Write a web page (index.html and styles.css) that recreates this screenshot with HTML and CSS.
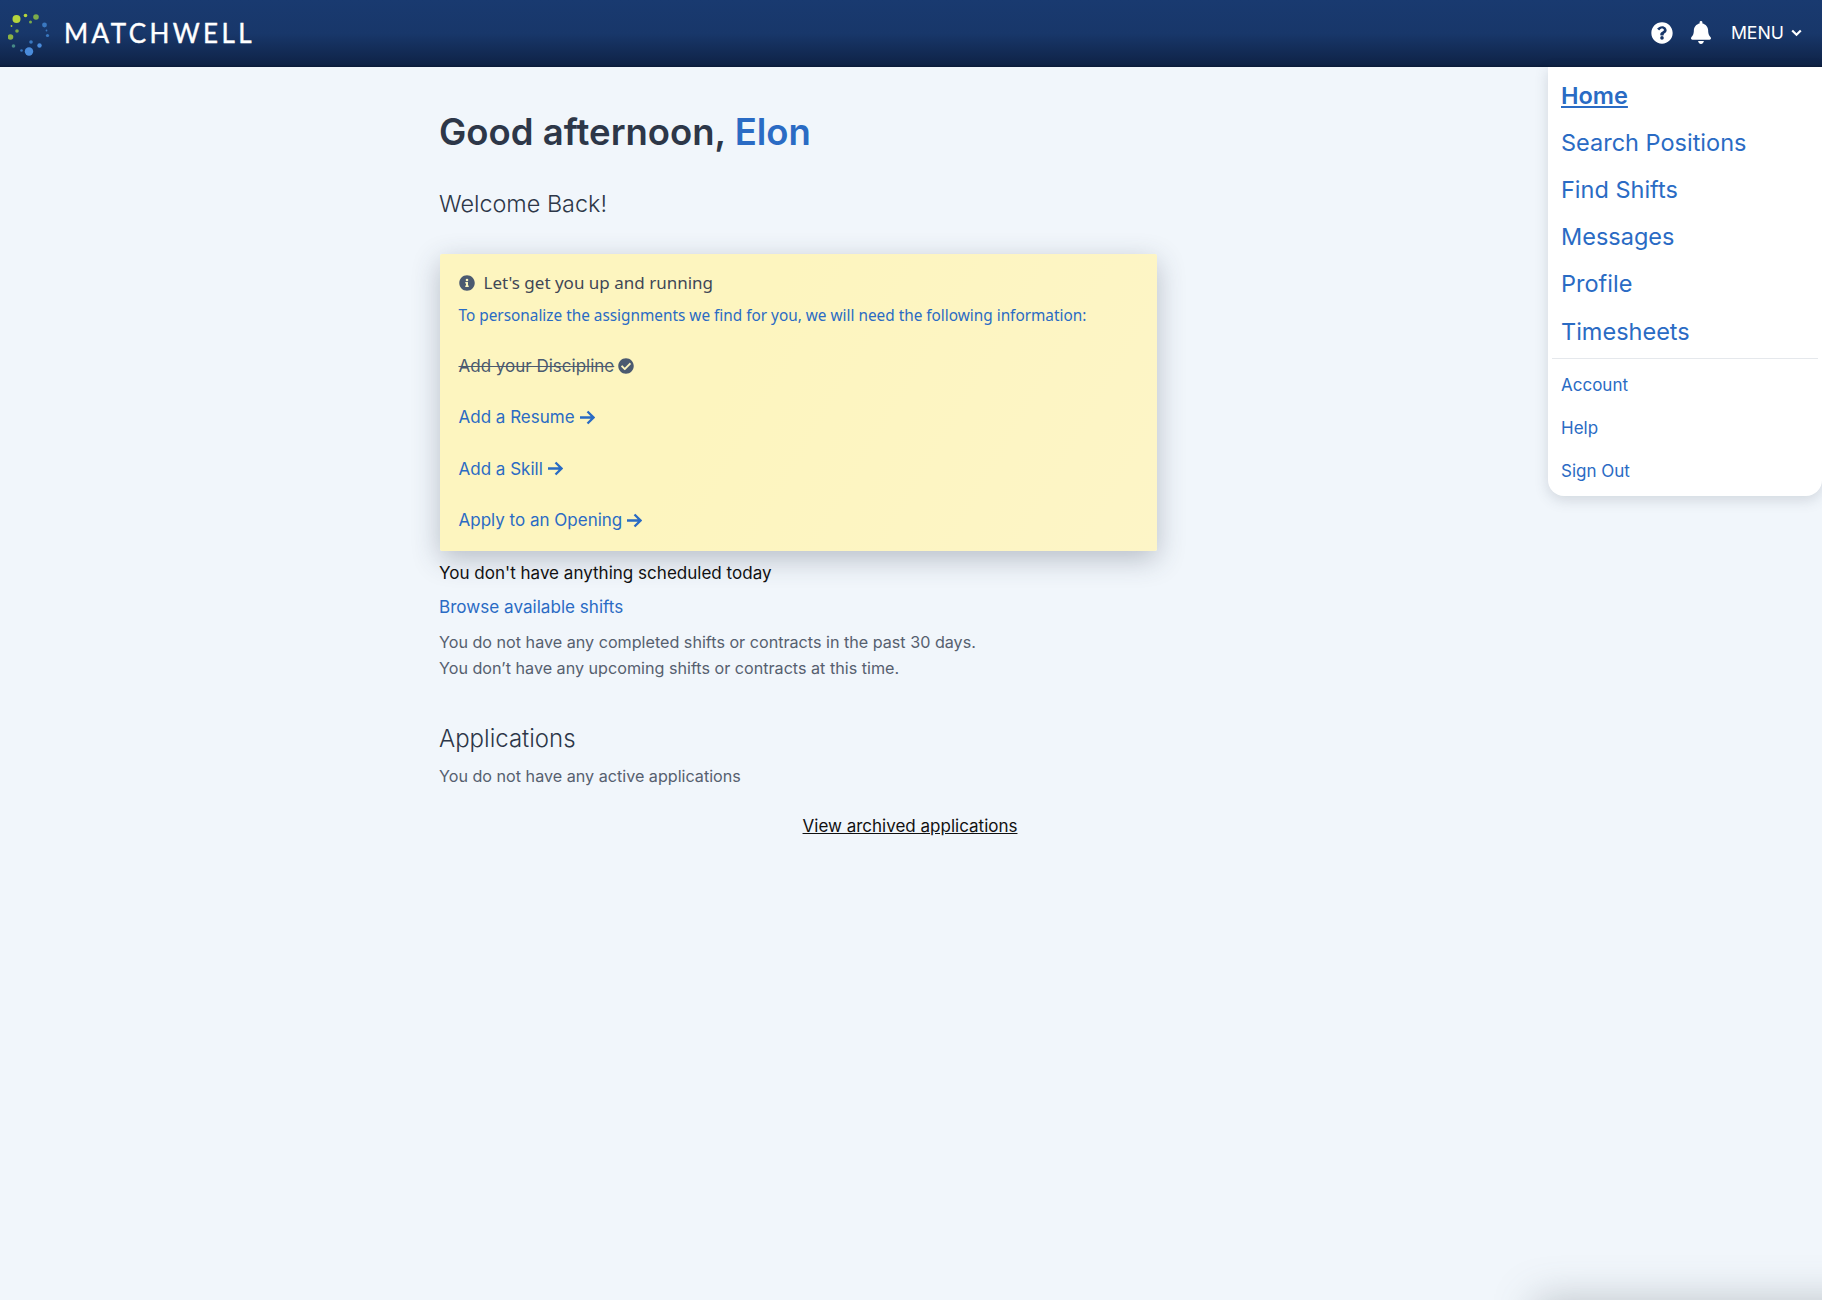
FILE: index.html
```html
<!DOCTYPE html>
<html>
<head>
<title>Matchwell</title>
<link rel="stylesheet" href="styles.css">
</head>
<body>
<header class="topbar">
  <div class="brand">
    <svg class="logo" width="46" height="46" viewBox="0 0 46 46">
      <circle cx="8.5" cy="9" r="4" fill="#b5d53c"/>
      <circle cx="17.5" cy="5.5" r="1.8" fill="#b5d53c"/>
      <circle cx="28" cy="7" r="2.8" fill="#7cab4a"/>
      <circle cx="22.5" cy="12" r="1.5" fill="#7cab4a"/>
      <circle cx="3.5" cy="16" r="0.9" fill="#a8c93c"/>
      <circle cx="9" cy="21" r="1.8" fill="#7cab4a"/>
      <circle cx="2.5" cy="27" r="2.8" fill="#8cb344"/>
      <circle cx="5.5" cy="36" r="1.8" fill="#468a87"/>
      <circle cx="13.5" cy="40.5" r="1.3" fill="#3a78c0"/>
      <circle cx="21" cy="41.5" r="4.2" fill="#4a8cdc"/>
      <circle cx="23" cy="32" r="1.8" fill="#3a78c0"/>
      <circle cx="31.5" cy="35.5" r="2.2" fill="#4a8cdc"/>
      <circle cx="36.5" cy="15" r="2.4" fill="#3a78c0"/>
      <circle cx="38.5" cy="20.5" r="0.9" fill="#3a78c0"/>
      <circle cx="39.5" cy="25.5" r="1.6" fill="#3a78c0"/>
    </svg>
    <span class="brand-name">MATCHWELL</span>
  </div>
  <div class="top-actions">
    <svg class="top-icon" width="22" height="22" viewBox="0 0 512 512"><path fill="#fff" d="M256 8C119 8 8 119 8 256s111 248 248 248 248-111 248-248S393 8 256 8zm0 404a42 42 0 1 1 0-84 42 42 0 0 1 0 84zm39.800-118v6c0 6.600-5.400 12-12 12h-55.600c-6.600 0-12-5.400-12-12v-12c0-40 30.300-56 53.200-68.800 19.600-11 31.600-18.500 31.600-33.100 0-19.300-24.600-32.100-44.500-32.100-25.900 0-37.900 12.300-54.700 33.500-4.100 5.200-11.600 6.100-16.800 2.200l-33.700-25.600c-5.100-3.900-6.200-11-2.700-16.300C175 121 208.400 96 260.500 96c48.700 0 103.500 38 103.500 94.500 0 62.500-68.200 69.600-68.200 103.500z"/></svg>
    <svg class="top-icon bell" width="20" height="23" viewBox="0 0 448 512"><path fill="#fff" d="M224 512c35.300 0 64-28.700 64-64H160c0 35.300 28.700 64 64 64zm215.400-149.700c-19.300-20.800-55.500-52-55.500-154.300 0-77.700-54.500-139.900-128-155.200V32a32 32 0 1 0-64 0v20.800C118.500 68.100 64 130.300 64 208c0 102.300-36.200 133.500-55.500 154.300A31.300 31.300 0 0 0 0 384c.1 16.400 13 32 32.100 32h383.800c19.100 0 32-15.600 32.100-32a31.200 31.200 0 0 0-8.600-21.700z"/></svg>
    <span class="menu-toggle">MENU
      <svg width="11" height="8" viewBox="0 0 11 8"><path d="M1.200 1.500 5.500 5.800 9.800 1.500" fill="none" stroke="#fff" stroke-width="2.200"/></svg>
    </span>
  </div>
</header>

<nav class="side-menu">
  <ul class="menu-main">
    <li><a class="current" href="#">Home</a></li>
    <li><a href="#">Search Positions</a></li>
    <li><a href="#">Find Shifts</a></li>
    <li><a href="#">Messages</a></li>
    <li><a href="#">Profile</a></li>
    <li><a href="#">Timesheets</a></li>
  </ul>
  <ul class="menu-sub">
    <li><a href="#">Account</a></li>
    <li><a href="#">Help</a></li>
    <li><a href="#">Sign Out</a></li>
  </ul>
</nav>

<main class="content">
  <h1 class="greeting">Good afternoon, <span class="name">Elon</span></h1>
  <p class="welcome">Welcome Back!</p>

  <section class="setup-card">
    <div class="setup-title">
      <svg width="16" height="16" viewBox="0 0 512 512"><path fill="#4b5a70" d="M256 8C119 8 8 119 8 256s111 248 248 248 248-111 248-248S393 8 256 8zm0 110a42 42 0 1 1 0 84 42 42 0 0 1 0-84zm56 254c0 6.600-5.400 12-12 12h-88c-6.600 0-12-5.400-12-12v-24c0-6.600 5.400-12 12-12h12v-64h-12c-6.600 0-12-5.400-12-12v-24c0-6.600 5.400-12 12-12h64c6.600 0 12 5.400 12 12v100h12c6.600 0 12 5.400 12 12v24z"/></svg>
      <span>Let's get you up and running</span>
    </div>
    <p class="setup-intro">To personalize the assignments we find for you, we will need the following information:</p>
    <div class="setup-item done"><s>Add your Discipline</s>
      <svg width="16" height="16" viewBox="0 0 512 512"><path fill="#4b5a70" d="M504 256c0 137-111 248-248 248S8 393 8 256 119 8 256 8s248 111 248 248zM227.300 387.300l184-184c6.200-6.200 6.200-16.400 0-22.600l-22.600-22.600c-6.200-6.200-16.400-6.200-22.600 0L216 308.100l-70.100-70.100c-6.200-6.200-16.400-6.200-22.600 0l-22.600 22.600c-6.200 6.200-6.200 16.400 0 22.600l104 104c6.200 6.300 16.400 6.300 22.600.1z"/></svg>
    </div>
    <a class="setup-item" href="#">Add a Resume <svg class="arrow" width="16" height="15" viewBox="0 0 16 15"><path d="M1 7.500H14M8.500 1.500l6 6-6 6" fill="none" stroke="#2a6bc4" stroke-width="2.300"/></svg></a>
    <a class="setup-item" href="#">Add a Skill <svg class="arrow" width="16" height="15" viewBox="0 0 16 15"><path d="M1 7.500H14M8.500 1.500l6 6-6 6" fill="none" stroke="#2a6bc4" stroke-width="2.300"/></svg></a>
    <a class="setup-item" href="#">Apply to an Opening <svg class="arrow" width="16" height="15" viewBox="0 0 16 15"><path d="M1 7.500H14M8.500 1.500l6 6-6 6" fill="none" stroke="#2a6bc4" stroke-width="2.300"/></svg></a>
  </section>

  <p class="schedule">You don't have anything scheduled today</p>
  <a class="browse" href="#">Browse available shifts</a>
  <p class="muted first">You do not have any completed shifts or contracts in the past 30 days.</p>
  <p class="muted">You don’t have any upcoming shifts or contracts at this time.</p>

  <h2 class="section-title">Applications</h2>
  <p class="muted">You do not have any active applications</p>
</main>

<div class="archived"><a href="#">View archived applications</a></div>
<div class="bottom-shadow"></div>
</body>
</html>
```

FILE: styles.css
```css
html, body {
  height: 100%;
}

body {
  margin: 0;
  font-family: Inter, "Liberation Sans", sans-serif;
  background-color: #f1f6fb;
  color: #2d3748;
  overflow: hidden;
}

p, h1, h2, ul {
  margin: 0;
  padding: 0;
}

a {
  color: #2a6bc4;
  text-decoration: none;
}

.topbar {
  height: 67px;
  box-sizing: border-box;
  display: flex;
  align-items: center;
  justify-content: space-between;
  padding: 0 20px 2px 8px;
  background: linear-gradient(#193a70 0%, #18376a 50%, #0f2347 96%, #0a1a38 100%);
}

.brand {
  display: flex;
  align-items: center;
  gap: 10px;
}

.brand-name {
  font-family: Lato, sans-serif;
  font-size: 26px;
  font-weight: 400;
  letter-spacing: 3.400px;
  -webkit-text-stroke: 0.4px #fff;
  color: #fff;
}

.top-actions {
  display: flex;
  align-items: center;
  color: #fff;
}

.top-icon {
  margin-right: 18px;
}

.bell {
  margin-right: 20px;
}

.menu-toggle {
  display: flex;
  align-items: center;
  gap: 7px;
  font-size: 17.700px;
}

.side-menu {
  position: absolute;
  top: 67px;
  right: 0;
  width: 274px;
  height: 429px;
  box-sizing: border-box;
  background: #fff;
  border-radius: 0 0 16px 16px;
  box-shadow: 0 4px 14px rgba(60, 70, 90, 0.18);
  padding: 5px 4px 0 4px;
}

.side-menu ul {
  list-style: none;
}

.menu-main {
  padding-bottom: 3px;
  border-bottom: 1px solid #e5e8ec;
}

.menu-main li {
  height: 47.100px;
  display: flex;
  align-items: center;
  padding-left: 9px;
  font-size: 23.500px;
}

.current {
  font-weight: 600;
  text-decoration: underline;
}

.menu-sub {
  padding-top: 5px;
}

.menu-sub li {
  height: 42.800px;
  display: flex;
  align-items: center;
  padding-left: 9px;
  font-size: 17px;
}

.content {
  width: 718px;
  margin-left: 439px;
  padding-top: 40px;
}

.greeting {
  font-size: 36.500px;
  line-height: 50px;
  font-weight: 600;
}

.name {
  color: #2a6bc4;
}

.welcome {
  margin-top: 31px;
  font-size: 23.400px;
  line-height: 32px;
  font-weight: 300;
}

.setup-card {
  margin: 34px 0 0 1px;
  height: 297px;
  box-sizing: border-box;
  padding: 17px 18px 0 18.500px;
  background: linear-gradient(120deg, #fdf5bf 40%, #fdf5c7 100%);
  border-radius: 2px;
  box-shadow: 0 8px 28px rgba(50, 60, 80, 0.3);
}

.setup-title {
  display: flex;
  align-items: center;
  gap: 9px;
  font-family: "Noto Sans", sans-serif;
  font-size: 17px;
  line-height: 24px;
  color: #3f4756;
}

.setup-intro {
  margin-top: 8px;
  font-family: "Noto Sans", sans-serif;
  font-size: 15.350px;
  line-height: 24px;
  color: #2a6bc4;
}

.setup-item {
  height: 51.500px;
  display: flex;
  align-items: center;
  gap: 4px;
  font-size: 17px;
}

.setup-item.done {
  margin-top: 13px;
  color: #4b5a70;
}

.schedule {
  margin-top: 10px;
  font-size: 17.050px;
  line-height: 24px;
  color: #111;
}

.browse {
  display: block;
  margin-top: 10px;
  font-size: 17.100px;
  line-height: 24px;
}

.muted {
  font-size: 16.150px;
  line-height: 26px;
  color: #56606f;
}

.muted.first {
  margin-top: 10px;
}

.section-title {
  margin-top: 42px;
  font-size: 24px;
  line-height: 32px;
  font-weight: 300;
}

.section-title + .muted {
  margin-top: 8px;
}

.archived {
  margin-top: 25px;
  padding-right: 2px;
  text-align: center;
  font-size: 17px;
  line-height: 24px;
}

.archived a {
  color: #111;
  text-decoration: underline;
}

.bottom-shadow {
  position: fixed;
  top: 1310px;
  left: 1545px;
  width: 320px;
  height: 100px;
  box-shadow: 0 0 40px 10px rgba(90, 100, 110, 0.35);
}
```
